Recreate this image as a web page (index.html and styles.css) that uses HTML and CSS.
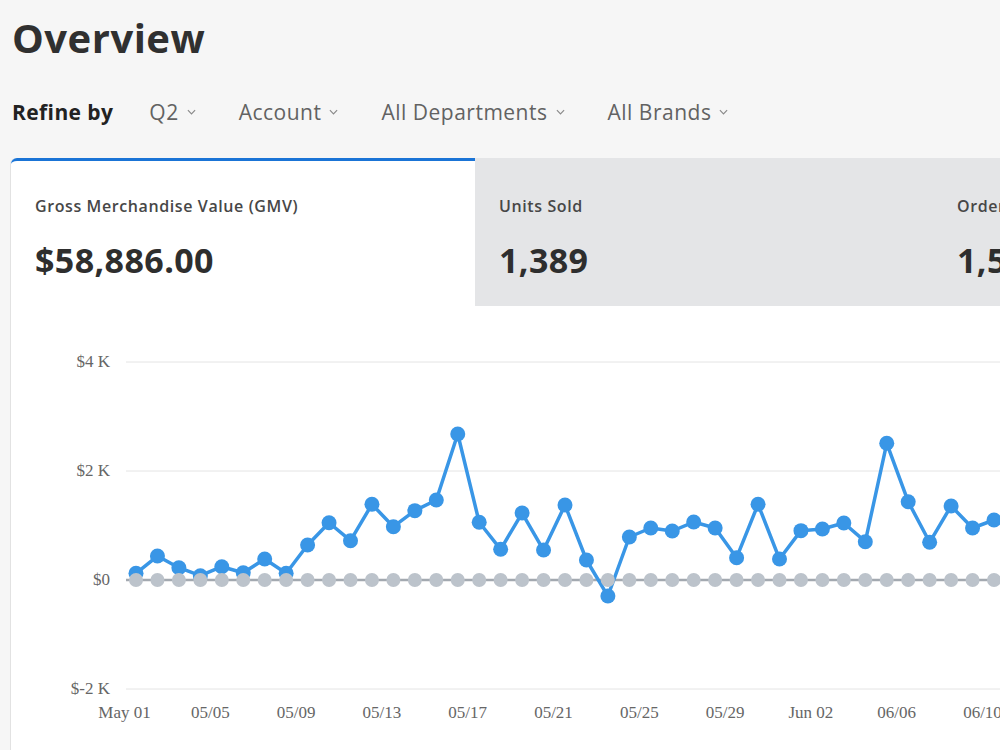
FILE: index.html
```html
<!DOCTYPE html>
<html>
<head>
  <title>Overview</title>
  <link rel="stylesheet" href="styles.css">
</head>

<body>
  <div class="page">
    <h1 class="title">Overview</h1>

    <div class="refine">
      <span class="refine-label">Refine by</span>
      <button class="filter">Q2 <svg class="chevron" viewBox="0 0 10 6"><polyline points="1,1 5,5 9,1" /></svg></button>
      <button class="filter">Account <svg class="chevron" viewBox="0 0 10 6"><polyline points="1,1 5,5 9,1" /></svg></button>
      <button class="filter">All Departments <svg class="chevron" viewBox="0 0 10 6"><polyline points="1,1 5,5 9,1" /></svg></button>
      <button class="filter">All Brands <svg class="chevron" viewBox="0 0 10 6"><polyline points="1,1 5,5 9,1" /></svg></button>
    </div>

    <div class="card">
      <div class="tabs">
        <div class="tab active">
          <div class="tab-label">Gross Merchandise Value (GMV)</div>
          <div class="tab-value">$58,886.00</div>
        </div>
        <div class="tab">
          <div class="tab-label">Units Sold</div>
          <div class="tab-value">1,389</div>
        </div>
        <div class="tab">
          <div class="tab-label">Orders</div>
          <div class="tab-value">1,512</div>
        </div>
      </div>

      <div class="chart">
        <svg id="gmv-chart" width="1449" height="444"></svg>
      </div>
    </div>
  </div>

  <script>
    const gmv = [
      123, 440, 226, 79, 244, 134, 385, 123, 642, 1051,
      721, 1389, 978, 1272, 1468, 2679, 1059, 563, 1229, 550,
      1376, 367, -294, 789, 954, 899, 1064, 954, 409, 1389,
      385, 905, 936, 1046, 703, 2508, 1437, 692, 1358, 954,
      1101, 1010, 860, 1180
    ];
    const dayLabels = [
      "May 01", "05/05", "05/09", "05/13", "05/17", "05/21",
      "05/25", "05/29", "Jun 02", "06/06", "06/10"
    ];
    const ticks = [
      { value: 4000, label: "$4 K" },
      { value: 2000, label: "$2 K" },
      { value: 0, label: "$0" },
      { value: -2000, label: "$-2 K" }
    ];

    const svg = document.getElementById("gmv-chart");
    const NS = "http://www.w3.org/2000/svg";

    // Chart geometry
    const startX = 125;
    const step = 21.45;
    const zeroY = 274;
    const perDollar = 0.0545;
    const gridLeft = 115;
    const width = 1449;

    const xAt = (i) => startX + i * step;
    const yAt = (v) => zeroY - v * perDollar;

    function add(name, attrs, text) {
      const node = document.createElementNS(NS, name);
      for (const key in attrs) {
        node.setAttribute(key, attrs[key]);
      }
      if (text) node.textContent = text;
      svg.appendChild(node);
      return node;
    }

    // Grid lines and y axis
    ticks.forEach((tick) => {
      const y = yAt(tick.value);
      add("line", {
        x1: gridLeft, x2: width, y1: y, y2: y,
        class: tick.value === 0 ? "zero-line" : "grid-line"
      });
      add("text", { x: 99, y: y + 5, class: "axis-label y-label" }, tick.label);
    });

    // x axis, one label every four days
    dayLabels.forEach((label, n) => {
      add("text", { x: xAt(n * 4) - 11.5, y: 412, class: "axis-label x-label" }, label);
    });

    // GMV series
    const points = gmv.map((v, i) => `${xAt(i)},${yAt(v)}`).join(" ");
    add("polyline", { points: points, class: "series-line" });
    gmv.forEach((v, i) => {
      add("circle", { cx: xAt(i), cy: yAt(v), r: 7.5, class: "series-dot" });
    });

    // comparison series (no data, sits on zero)
    gmv.forEach((v, i) => {
      add("circle", { cx: xAt(i), cy: zeroY, r: 7, class: "compare-dot" });
    });
  </script>
</body>
</html>
```

FILE: styles.css
```css
body {
  margin: 0;
  background-color: #f6f6f6;
  font-family: "Open Sans", Arial, sans-serif;
  color: #333;
  overflow: hidden;
}

.page {
  padding-left: 10px;
}

.title {
  margin: 13px 0 0 2px;
  font-size: 40px;
  line-height: 50px;
  font-weight: 700;
  letter-spacing: 0.5px;
  color: #303030;
}

.refine {
  display: flex;
  align-items: center;
  margin-top: 37px;
  padding-left: 2px;
  height: 24px;
}

.refine-label {
  font-size: 21px;
  line-height: 24px;
  font-weight: 700;
  letter-spacing: 0.4px;
  color: #222;
  margin-right: 36px;
}

.filter {
  display: flex;
  align-items: center;
  gap: 8px;
  padding: 0;
  margin-right: 43px;
  border: none;
  background: none;
  font-family: "Open Sans", Arial, sans-serif;
  font-size: 21px;
  line-height: 24px;
  letter-spacing: 0.5px;
  color: #626262;
  cursor: pointer;
}

.chevron {
  width: 9px;
  height: 6px;
  fill: none;
  stroke: #8a8a8a;
  stroke-width: 1.3;
}

.card {
  margin-top: 34px;
  width: 1450px;
  background-color: #fff;
  border-left: 1px solid #e2e2e2;
  border-radius: 6px 0 0 0;
}

.tabs {
  display: flex;
}

.tab {
  width: 458px;
  height: 148px;
  box-sizing: border-box;
  padding: 38px 24px 0;
  background-color: #e4e5e7;
}

.tab.active {
  width: 464px;
  background-color: #fff;
  border-top: 3px solid #1a74d6;
  border-radius: 6px 0 0 0;
  padding-top: 35px;
}

.tab-label {
  font-size: 16px;
  line-height: 20px;
  font-weight: 600;
  letter-spacing: 0.6px;
  color: #474747;
}

.tab-value {
  margin-top: 22px;
  font-size: 34px;
  line-height: 44px;
  font-weight: 700;
  letter-spacing: 0.4px;
  color: #2e2e2e;
}

.chart svg {
  display: block;
}

.grid-line {
  stroke: #e4e4e4;
  stroke-width: 1;
}

.zero-line {
  stroke: #a3a9b0;
  stroke-width: 2.5;
}

.axis-label {
  font-family: "Liberation Serif", "Times New Roman", serif;
  font-size: 17px;
  fill: #666;
}

.y-label {
  text-anchor: end;
}

.x-label {
  text-anchor: middle;
}

.series-line {
  fill: none;
  stroke: #3996e6;
  stroke-width: 3.5;
  stroke-linejoin: round;
}

.series-dot {
  fill: #3996e6;
}

.compare-dot {
  fill: #bcc3cb;
}
```
